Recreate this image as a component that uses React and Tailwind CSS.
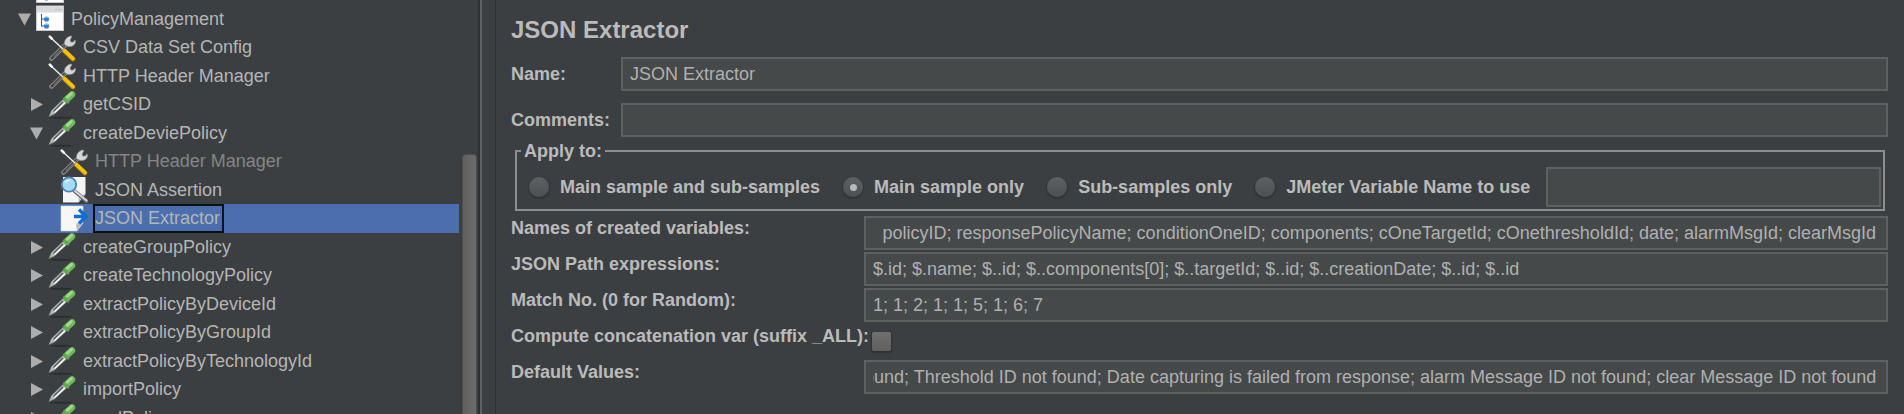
import React, { useState, useRef, useEffect } from "react";

const treeItems = [
  { name: "", level: 0, icon: "controller", arrow: "open" },
  { name: "PolicyManagement", level: 0, icon: "controller", arrow: "open" },
  { name: "CSV Data Set Config", level: 1, icon: "tools" },
  { name: "HTTP Header Manager", level: 1, icon: "tools" },
  { name: "getCSID", level: 1, icon: "sampler", arrow: "closed" },
  { name: "createDeviePolicy", level: 1, icon: "sampler", arrow: "open" },
  { name: "HTTP Header Manager", level: 2, icon: "tools", disabled: true },
  { name: "JSON Assertion", level: 2, icon: "assertion" },
  { name: "JSON Extractor", level: 2, icon: "extractor" },
  { name: "createGroupPolicy", level: 1, icon: "sampler", arrow: "closed" },
  { name: "createTechnologyPolicy", level: 1, icon: "sampler", arrow: "closed" },
  { name: "extractPolicyByDeviceId", level: 1, icon: "sampler", arrow: "closed" },
  { name: "extractPolicyByGroupId", level: 1, icon: "sampler", arrow: "closed" },
  { name: "extractPolicyByTechnologyId", level: 1, icon: "sampler", arrow: "closed" },
  { name: "importPolicy", level: 1, icon: "sampler", arrow: "closed" },
  { name: "seedPolicy", level: 1, icon: "sampler", arrow: "closed" },
];

const indents = ["pl-[18px]", "pl-[30px]", "pl-[42px]"];

const scopes = [
  "Main sample and sub-samples",
  "Main sample only",
  "Sub-samples only",
  "JMeter Variable Name to use",
];

const inputStyle =
  "min-w-0 w-full border-2 border-[#5f6161] bg-[#45494a] pr-[10px] pl-[7px] text-lg leading-6 text-[#b0b0b0] outline-none";

const Arrow = ({ type }) => (
  <svg className="h-[13px] w-[13px] shrink-0" viewBox="0 0 13 13" fill="#adadad">
    {type === "open" && <path d="M0 0.5h13L6.5 12.5z" />}
    {type === "closed" && <path d="M1 0v13L13 6.5z" />}
  </svg>
);

const ControllerIcon = () => (
  <>
    <rect x="0.5" y="1" width="27" height="24.500" fill="#fdfdfd" stroke="#c9c9c9" />
    <rect x="1" y="1.500" width="26" height="6" fill="#d9d9db" />
    <path d="M19 4.500h2M22 4.500h2M25 4.500h1" stroke="#b5b5b8" />
    <path d="M5.500 9v12.500M5.500 14h3M5.500 21h3" stroke="#555" fill="none" />
    <circle cx="10.500" cy="14" r="2.600" fill="#2f7fe0" />
    <circle cx="10.500" cy="21" r="2.600" fill="#2f7fe0" />
    <path d="M8.500 13q2-2 4 0M8.500 20q2-2 4 0" stroke="#9cc8f8" fill="none" />
  </>
);

const ToolsIcon = () => (
  <>
    <path d="M3.500 24.500L18 10.500" stroke="#989898" strokeWidth="4.500" strokeLinecap="round" />
    <path d="M3.700 24.300L18 10.500" stroke="#434648" strokeWidth="2.600" strokeLinecap="round" />
    <path d="M6 22.500L18 11" stroke="#8a8a8a" strokeWidth="0.800" />
    <path
      d="M16.500 10.500c-0.500-4 2-7.500 6-8.500l1.500 0.500-2 3.500 1 2.300 2.500-0.300 1.500-2 0.500 1c0 4-3.500 6-7.500 5.500z"
      fill="#d6d6d6"
      stroke="#8f8f8f"
      strokeWidth="0.600"
    />
    <path d="M2.500 3.500L15.500 15.500" stroke="#e9e9e9" strokeWidth="1.500" strokeLinecap="round" />
    <path d="M1.800 2.600l2 2" stroke="#f5f5f5" strokeWidth="2.600" strokeLinecap="round" />
    <path d="M16.500 17l8.500 8" stroke="#b98a00" strokeWidth="4.600" strokeLinecap="round" />
    <path d="M16.500 16.500l8.500 8" stroke="#f7c10c" strokeWidth="3.400" strokeLinecap="round" />
  </>
);

const SamplerIcon = () => (
  <>
    <ellipse cx="13" cy="26.700" rx="11" ry="1" fill="#2b2d2f" />
    <path d="M1 25.500l2.500-6L15 8.500l3.500 3.500L6.500 23z" fill="#b9bcbc" stroke="#858888" strokeWidth="0.600" />
    <path d="M5.500 20.500L15 11" stroke="#505355" strokeWidth="1.400" />
    <path d="M6.500 21.500L17 11.800" stroke="#f7f7f7" strokeWidth="1.400" />
    <path d="M19 8l5-4.500" stroke="#70b85c" strokeWidth="6.500" strokeLinecap="round" />
    <path d="M19 6.500l4.500-4" stroke="#a3d890" strokeWidth="3" strokeLinecap="round" />
    <path d="M16.500 7.500l3.500 3.500" stroke="#5fac4c" strokeWidth="3" strokeLinecap="round" />
  </>
);

const AssertionIcon = () => (
  <>
    <path d="M3 1h22.500v17l-7 8.500H3z" fill="#f4f4f4" />
    <path d="M25.500 18l-7 8.500v-6.500z" fill="#c2c2c2" />
    <path d="M15 15.500l11.500 9.500" stroke="#6f7274" strokeWidth="4" strokeLinecap="round" />
    <path d="M15 15l11.500 9.500" stroke="#d5d5d5" strokeWidth="2" strokeLinecap="round" />
    <circle cx="9" cy="8.500" r="7.200" fill="#a5dbf8" stroke="#4f82ad" strokeWidth="1.800" />
    <path d="M4.500 7.500q1.500-4.500 7-3.500-4 0.500-7 3.500z" fill="#ecfaff" />
  </>
);

const ExtractorIcon = () => (
  <>
    <path d="M1 1h22v17l-6 8H1z" fill="#f7f7f7" stroke="#d7d7d7" strokeWidth="0.600" />
    <path d="M23 17l-6 9-1-7.500z" fill="#bdbdbd" />
    <path d="M14 11.500h10M19 4.500l7 7-7 7" fill="none" stroke="#0f6fd0" strokeWidth="3.500" />
  </>
);

const icons = {
  controller: ControllerIcon,
  tools: ToolsIcon,
  sampler: SamplerIcon,
  assertion: AssertionIcon,
  extractor: ExtractorIcon,
};

const TreeRow = ({ item, selected, onSelect }) => {
  const Icon = icons[item.icon];
  return (
    <li className="odd:h-[29px] even:h-7">
      <button
        type="button"
        onClick={onSelect}
        className={`flex h-full w-full items-center text-left ${indents[item.level]} ${
          selected ? "bg-[#4b6eaf]" : ""
        }`}
      >
        <Arrow type={item.arrow} />
        <svg className="ml-[5px] h-7 w-7 shrink-0" viewBox="0 0 28 28">
          <Icon />
        </svg>
        <span
          className={`ml-[6px] pr-[3px] pl-px text-lg leading-[27px] whitespace-nowrap ${
            item.disabled ? "text-[#858585]" : "text-[#b5b5b5]"
          } ${selected ? "outline-2 -outline-offset-1 outline-[#0b0f18]" : ""}`}
        >
          {item.name}
        </span>
      </button>
    </li>
  );
};

// long values stay scrolled to their end, like a text box after typing
const Field = ({ id, label, value, className = "" }) => {
  const ref = useRef(null);
  useEffect(() => {
    ref.current.scrollLeft = ref.current.scrollWidth;
  }, []);
  return (
    <>
      <label htmlFor={id} className="self-start leading-6">
        {label}
      </label>
      <input
        ref={ref}
        id={id}
        type="text"
        defaultValue={value}
        className={`h-[34px] ${inputStyle} ${className}`}
      />
    </>
  );
};

const App = () => {
  const [selected, setSelected] = useState(8);
  const [scope, setScope] = useState(scopes[1]);

  return (
    <div className="flex h-screen overflow-hidden bg-[#3c3f41] font-['Liberation_Sans',Arial,sans-serif] text-lg text-[#bbbbbb]">
      {/*Test plan tree*/}
      <nav className="flex w-[478px] shrink-0">
        <ul className="-mt-6 w-[459px]">
          {treeItems.map((item, i) => (
            <TreeRow
              key={i}
              item={item}
              selected={i === selected}
              onSelect={() => setSelected(i)}
            />
          ))}
        </ul>
        <div className="mt-[154px] ml-[3px] w-[15px] rounded-t-sm border-x border-t border-[#4c4e4f] bg-linear-to-r from-[#606060] to-[#6b6b6b]"></div>
      </nav>
      {/*Splitter*/}
      <div className="w-[18px] shrink-0 border-r border-l-2 border-[#2f3234]">
        <div className="h-full w-full border-l-2 border-[#606365]"></div>
      </div>

      <main className="min-w-0 flex-1 pr-4 pl-[15px] font-bold">
        <h1 className="pt-[15px] text-2xl leading-[30px]">JSON Extractor</h1>
        <div className="mt-3 grid grid-cols-[110px_1fr] items-center gap-y-3">
          <label htmlFor="name">Name:</label>
          <input
            id="name"
            type="text"
            defaultValue="JSON Extractor"
            className={`h-[34px] font-normal ${inputStyle}`}
          />
          <label htmlFor="comments">Comments:</label>
          <input id="comments" type="text" className={`h-[34px] font-normal ${inputStyle}`} />
        </div>

        <fieldset className="mt-[2px] mr-[3px] ml-1 flex items-center border-2 border-[#8c8e8f] pt-1 pr-[2px] pb-[2px] pl-3">
          <legend className="-ml-2 px-[3px] leading-6">Apply to:</legend>
          {scopes.map((text) => (
            <label key={text} className="mr-[23px] flex items-center whitespace-nowrap last-of-type:mr-4">
              <input
                type="radio"
                name="scope"
                checked={scope === text}
                onChange={() => setScope(text)}
                className="mr-[11px] grid h-5 w-5 appearance-none place-items-center rounded-full bg-linear-to-b from-[#5c6164] to-[#4c5053] shadow-[0_1px_1px_1px_#323537] before:h-[7px] before:w-[7px] before:rounded-full checked:before:bg-[#b8b8b8]"
              />
              {text}
            </label>
          ))}
          <input
            type="text"
            aria-label="JMeter variable name"
            className={`h-10 flex-1 font-normal ${inputStyle}`}
          />
        </fieldset>

        <div className="mt-[5px] grid grid-cols-[353px_1fr] items-center gap-y-[2px] [&>input]:font-normal">
          <Field
            id="refNames"
            label="Names of created variables:"
            value="policyID; responsePolicyName; conditionOneID; components; cOneTargetId; cOnethresholdId; date; alarmMsgId; clearMsgId"
            className="text-right"
          />
          <Field
            id="jsonPaths"
            label="JSON Path expressions:"
            value="$.id; $.name; $..id; $..components[0]; $..targetId; $..id; $..creationDate; $..id; $..id"
          />
          <Field id="matchNo" label="Match No. (0 for Random):" value="1; 1; 2; 1; 1; 5; 1; 6; 7" />
          <label htmlFor="concat" className="self-start leading-6 whitespace-nowrap">
            Compute concatenation var (suffix _ALL):
          </label>
          <div className="flex h-[34px] items-center pl-2">
            <input
              id="concat"
              type="checkbox"
              className="h-[19px] w-[19px] appearance-none rounded-[2px] bg-linear-to-b from-[#707070] to-[#5f5f5f] shadow-[0_1px_1px_1px_#2f3234] checked:bg-[#b8b8b8]"
            />
          </div>
          <Field
            id="defaults"
            label="Default Values:"
            value="Policy ID not found; Threshold ID not found; Date capturing is failed from response; alarm Message ID not found; clear Message ID not found"
          />
        </div>
      </main>
    </div>
  );
};

export default App;
